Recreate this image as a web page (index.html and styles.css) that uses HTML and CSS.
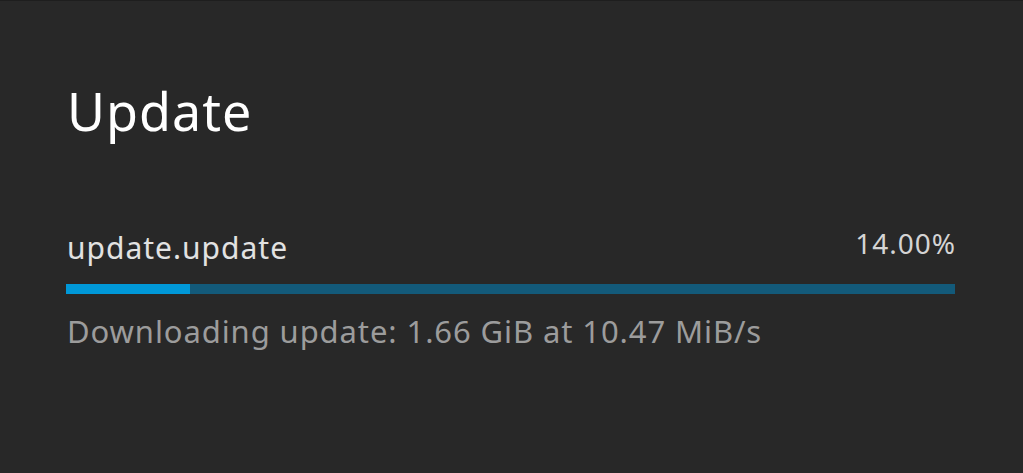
FILE: index.html
```html
<!DOCTYPE html>
<html>
<head>
<meta charset="utf-8">
<link rel="stylesheet" href="styles.css">
</head>
<body>
<div class="panel">
  <h1 class="title">Update</h1>
  <div class="task">
    <div class="task-head">
      <span class="task-name">update.update</span>
      <span class="task-pct">14.00%</span>
    </div>
    <div class="bar"><div class="bar-fill" style="width:14%"></div></div>
    <div class="task-status">Downloading update: 1.66 GiB at 10.47 MiB/s</div>
  </div>
</div>
</body>
</html>
```
FILE: styles.css
```css
html, body {
  margin: 0;
  padding: 0;
  background: #282828;
}
body {
  width: 1023px;
  height: 473px;
  overflow: hidden;
  font-family: "Noto Sans", "Open Sans", sans-serif;
}
.panel {
  box-sizing: border-box;
  height: 473px;
  border-top: 1px solid #1e1e1e;
  padding: 77px 68px 0 66px;
}
.title {
  margin: 0;
  font-size: 52px;
  font-weight: 400;
  letter-spacing: 1px;
  color: #ffffff;
  line-height: 66px;
  padding-left: 1px;
}
.task {
  margin-top: 85px;
}
.task-head {
  display: flex;
  justify-content: space-between;
  align-items: flex-start;
  padding-left: 1px;
}
.task-name {
  font-size: 30px;
  letter-spacing: 1px;
  color: #e2e2e2;
  line-height: 38px;
}
.task-pct {
  font-size: 28px;
  letter-spacing: 1px;
  margin-right: -1px;
  color: #d4d4d4;
  line-height: 28px;
}
.bar {
  margin-top: 17px;
  height: 10px;
  background: #135a7a;
}
.bar-fill {
  height: 100%;
  background: #0098d8;
}
.task-status {
  margin-top: 17px;
  font-size: 31px;
  letter-spacing: 0.9px;
  color: #9c9c9c;
  line-height: 40px;
  padding-left: 1px;
}
```
